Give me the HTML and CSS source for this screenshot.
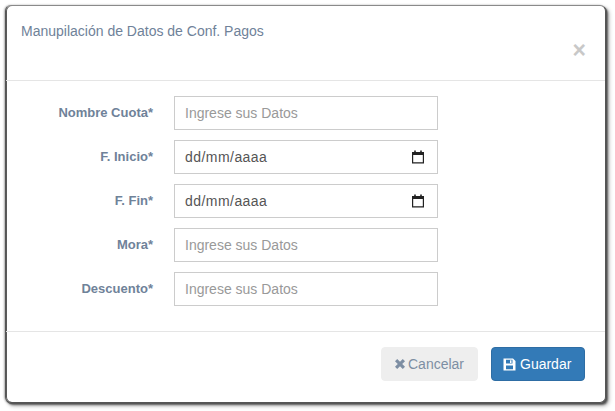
FILE: index.html
```html
<!DOCTYPE html>
<html lang="es">
<head>
<meta charset="utf-8">
<title>Conf. Pagos</title>
<link rel="stylesheet" href="styles.css">
</head>
<body>
<div class="modal">
  <header class="modal-header">
    <h4 class="modal-title">Manupilación de Datos de Conf. Pagos</h4>
    <button class="close" type="button">×</button>
  </header>
  <form class="modal-body">
    <div class="row">
      <label class="label">Nombre Cuota*</label>
      <input class="control" type="text" placeholder="Ingrese sus Datos">
    </div>
    <div class="row">
      <label class="label">F. Inicio*</label>
      <div class="control date">
        <span>dd/mm/aaaa</span>
        <svg class="cal" viewBox="0 0 14 14" width="14" height="14"><path d="M3.200 0.500h1.600v1.500h4.400V0.500h1.600v1.500h2.200v11.500H1V2h2.200z M2.200 5v7.300h9.600V5z" fill="#222" fill-rule="evenodd"/></svg>
      </div>
    </div>
    <div class="row">
      <label class="label">F. Fin*</label>
      <div class="control date">
        <span>dd/mm/aaaa</span>
        <svg class="cal" viewBox="0 0 14 14" width="14" height="14"><path d="M3.200 0.500h1.600v1.500h4.400V0.500h1.600v1.500h2.200v11.500H1V2h2.200z M2.200 5v7.300h9.600V5z" fill="#222" fill-rule="evenodd"/></svg>
      </div>
    </div>
    <div class="row">
      <label class="label">Mora*</label>
      <input class="control" type="text" placeholder="Ingrese sus Datos">
    </div>
    <div class="row">
      <label class="label">Descuento*</label>
      <input class="control" type="text" placeholder="Ingrese sus Datos">
    </div>
  </form>
  <footer class="modal-footer">
    <button class="btn btn-default" type="button">
      <svg class="ico" viewBox="0 0 12 12" width="12" height="12"><path d="M1 3.200 3.200 1 6 3.800 8.800 1 11 3.200 8.200 6 11 8.800 8.800 11 6 8.200 3.200 11 1 8.800 3.800 6z" fill="currentColor"/></svg>
      Cancelar
    </button>
    <button class="btn btn-primary" type="button">
      <svg class="ico" viewBox="0 0 13 13" width="13" height="13"><path d="M0.500 0.500h9.500l2.500 2.500v9.500H0.500z M3 1.700v3.800h6.500V1.700z M7 2.200h1.500v2.700H7z M3 7.500v3.800h7V7.500z" fill="currentColor" fill-rule="evenodd"/></svg>
      Guardar
    </button>
  </footer>
</div>
</body>
</html>
```
FILE: styles.css
```css
* { box-sizing: border-box; }
html, body { margin: 0; height: 100%; }
body {
  background: #fff;
  font-family: "Liberation Sans", Arial, sans-serif;
  font-size: 14px;
  line-height: 20px;
  color: #6f8299;
  padding: 5px 0 0 5px;
}
.modal {
  width: 601px;
  height: 398px;
  background: #fff;
  border: 1px solid #555;
  border-top-color: #8a8a8a;
  border-radius: 6px;
  box-shadow:
    inset 1px 0 0 #5a5a5a,
    1px 1px 0 #555,
    2px 2px 2px rgba(0, 0, 0, .5),
    3px 3px 4px rgba(0, 0, 0, .3),
    -1px 0 2px rgba(0, 0, 0, .3);
  display: flex;
  flex-direction: column;
}
.modal-header {
  height: 75px;
  padding: 15px;
  border-bottom: 1px solid #e5e5e5;
  display: flex;
  justify-content: space-between;
}
.modal-title {
  margin: 0;
  font-size: 14px;
  font-weight: 400;
  line-height: 20px;
  color: #6f8299;
}
.close {
  border: 0;
  background: none;
  padding: 0;
  margin: 17px 4px 0 0;
  height: 24px;
  font: 700 23px/24px "Liberation Sans", Arial, sans-serif;
  color: #c8c8c8;
}
.modal-body {
  flex: 1;
  padding: 15px 0 0;
  display: flex;
  flex-direction: column;
  gap: 10px;
}
.row {
  display: flex;
  align-items: center;
  height: 34px;
}
.label {
  width: 147px;
  text-align: right;
  font-size: 13px;
  font-weight: 700;
  color: #6f8299;
  margin-right: 21px;
}
.control {
  width: 264px;
  height: 34px;
  border: 1px solid #ccc;
  background: #fff;
  padding: 6px 10px;
  font: 14px/20px "Liberation Sans", Arial, sans-serif;
  color: #555;
  border-radius: 0;
  outline: 0;
}
.control::placeholder { color: #999; opacity: 1; }
.date {
  display: flex;
  align-items: center;
  justify-content: space-between;
  letter-spacing: .45px;
  padding-left: 10px;
  padding-right: 12px;
}
.modal-footer {
  height: 71px;
  border-top: 1px solid #e5e5e5;
  padding: 15px 20px 0 0;
  display: flex;
  justify-content: flex-end;
  gap: 13px;
}
.btn {
  height: 34px;
  border: 1px solid transparent;
  border-radius: 4px;
  font: 14px/20px "Liberation Sans", Arial, sans-serif;
  display: inline-flex;
  align-items: center;
}
.btn-default {
  width: 97px;
  padding: 0 12px;
  gap: 2px;
  background: #eee;
  border-color: #eee;
  color: #7d8ea3;
}
.btn-primary {
  width: 94px;
  padding: 0 11px;
  gap: 4px;
  background: #337ab7;
  border-color: #2e6da4;
  color: #fff;
}
.ico { flex: none; }
```
